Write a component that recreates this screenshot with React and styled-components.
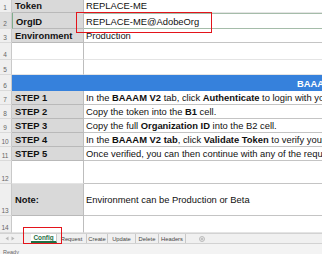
import React from 'react';
import styled, { createGlobalStyle } from 'styled-components';

const Global = createGlobalStyle`
  html, body { margin: 0; padding: 0; background: #fff; }
  body { font-family: "Liberation Sans", Arial, sans-serif; }
`;

const Window = styled.div`
  position: relative;
  width: 322px;
  height: 254px;
  overflow: hidden;
  background: #fff;
  display: flex;
  flex-direction: column;
`;

const Sheet = styled.div`
  display: flex;
  flex-direction: column;
`;

const Row = styled.div`
  display: grid;
  grid-template-columns: 12px 72px 1fr;
  height: ${p => p.$h}px;
  font-size: 9.4px;
  line-height: 11px;
  color: #111;
`;

const RowHead = styled.div`
  background: ${p => (p.$sel ? '#dedede' : '#efefef')};
  border-right: 1px solid #c9c9c9;
  border-bottom: 1px solid #dadada;
  font-size: 6.5px;
  line-height: 8px;
  color: #666;
  display: flex;
  align-items: flex-end;
  justify-content: center;
  padding-right: 1px;
  box-sizing: border-box;
`;

const KeyCell = styled.div`
  background: ${p => (p.$gray ? '#d9d9d9' : '#fff')};
  border-right: 1px solid #bdbdbd;
  border-bottom: 1px solid ${p => (p.$gray ? '#b9b9b9' : '#e4e4e4')};
  border-left: ${p => (p.$sel ? '1px solid #7fae8c' : '0')};
  font-weight: bold;
  padding: 0 0 1px 3px;
  display: flex;
  align-items: ${p => (p.$mid ? 'center' : 'flex-end')};
  white-space: nowrap;
  box-sizing: border-box;
`;

const ValueCell = styled.div`
  border-bottom: 1px solid ${p => (p.$sel ? '#a5bca9' : p.$line ? '#c4c4c4' : '#e4e4e4')};
  border-top: ${p => (p.$sel ? '1px solid #a5bca9' : '0')};
  padding: 0 0 1px 2px;
  display: flex;
  align-items: ${p => (p.$mid ? 'center' : 'flex-end')};
  white-space: pre;
  overflow: hidden;
  box-sizing: border-box;
  b { font-weight: bold; }
`;

const Banner = styled.div`
  grid-column: 2 / 4;
  background: #3681dc;
  color: #fff;
  font-weight: bold;
  padding-left: 285px;
  display: flex;
  align-items: center;
  white-space: nowrap;
  overflow: hidden;
`;

const TabBar = styled.div`
  height: 11px;
  background: #f0f0f0;
  border-top: 1px solid #d2d2d2;
  border-bottom: 1px solid #d2d2d2;
  display: flex;
  align-items: stretch;
  font-size: 5.8px;
  color: #444;
`;

const Arrows = styled.div`
  width: 31px;
  display: flex;
  align-items: center;
  gap: 2px;
  padding-left: 5px;
  box-sizing: border-box;
`;

const Tab = styled.div`
  width: ${p => p.$w}px;
  display: flex;
  align-items: center;
  justify-content: center;
  border-right: 1px solid #c8c8c8;
  box-sizing: border-box;
  background: ${p => (p.$active ? '#fff' : 'transparent')};
  color: ${p => (p.$active ? '#1e7145' : '#444')};
  font-weight: ${p => (p.$active ? 'bold' : 'normal')};
  font-size: ${p => (p.$active ? '6.4px' : '5.8px')};
  border-bottom: ${p => (p.$active ? '2px solid #1e7145' : '0')};
  white-space: nowrap;
`;

const AddTab = styled.div`
  margin-left: 13px;
  display: flex;
  align-items: center;
`;

const StatusBar = styled.div`
  flex: 1;
  background: #f3f3f3;
  font-size: 5.5px;
  color: #666;
  padding: 5px 0 0 3px;
`;

const Mark = styled.div`
  position: absolute;
  left: ${p => p.$x}px;
  top: ${p => p.$y}px;
  width: ${p => p.$w}px;
  height: ${p => p.$h}px;
  border: 1.5px solid #e3141b;
  box-sizing: border-box;
  pointer-events: none;
`;

const steps = [
  [7, 'STEP 1', <>In the <b>BAAAM V2</b> tab, click <b>Authenticate</b> to login with your Adobe ID.</>],
  [8, 'STEP 2', <>Copy the token into the <b>B1</b> cell.</>],
  [9, 'STEP 3', <>Copy the full <b>Organization ID</b> into the B2 cell.</>],
  [10, 'STEP 4', <>In the <b>BAAAM V2 tab</b>, click <b>Validate Token</b> to verify your token.</>],
  [11, 'STEP 5', <>Once verified, you can then continue with any of the request tabs.</>],
];

const Tri = ({ dir }) => (
  <svg width="4" height="5" viewBox="0 0 4 5">
    <path d={dir === 'l' ? 'M3.5 0.5 L0.5 2.5 L3.5 4.5 Z' : 'M0.5 0.5 L3.5 2.5 L0.5 4.5 Z'} fill="#b8b8b8" />
  </svg>
);

export default function App() {
  return (
    <Window>
      <Global />
      <Sheet>
        <Row $h={13}>
          <RowHead>1</RowHead>
          <KeyCell $gray>Token</KeyCell>
          <ValueCell>REPLACE-ME</ValueCell>
        </Row>
        <Row $h={16}>
          <RowHead $sel>2</RowHead>
          <KeyCell $gray $sel>OrgID</KeyCell>
          <ValueCell $sel>REPLACE-ME@AdobeOrg</ValueCell>
        </Row>
        <Row $h={14}>
          <RowHead>3</RowHead>
          <KeyCell $gray>Environment</KeyCell>
          <ValueCell $line>Production</ValueCell>
        </Row>
        <Row $h={17}>
          <RowHead>4</RowHead>
          <KeyCell />
          <ValueCell />
        </Row>
        <Row $h={15}>
          <RowHead>5</RowHead>
          <KeyCell />
          <ValueCell />
        </Row>
        <Row $h={16}>
          <RowHead>6</RowHead>
          <Banner>BAAAM V2 Setup</Banner>
        </Row>
        {steps.map(([n, k, v]) => (
          <Row $h={14} key={n}>
            <RowHead>{n}</RowHead>
            <KeyCell $gray>{k}</KeyCell>
            <ValueCell $line><span>{v}</span></ValueCell>
          </Row>
        ))}
        <Row $h={23}>
          <RowHead>12</RowHead>
          <KeyCell />
          <ValueCell $line />
        </Row>
        <Row $h={32}>
          <RowHead>13</RowHead>
          <KeyCell $gray $mid>Note:</KeyCell>
          <ValueCell $line $mid>Environment can be Production or Beta</ValueCell>
        </Row>
        <Row $h={17}>
          <RowHead>14</RowHead>
          <KeyCell />
          <ValueCell />
        </Row>
      </Sheet>
      <TabBar>
        <Arrows>
          <Tri dir="l" />
          <Tri dir="r" />
        </Arrows>
        <Tab $w={26} $active>Config</Tab>
        <Tab $w={30}>Request</Tab>
        <Tab $w={21}>Create</Tab>
        <Tab $w={28}>Update</Tab>
        <Tab $w={23}>Delete</Tab>
        <Tab $w={27}>Headers</Tab>
        <AddTab>
          <svg width="6" height="6" viewBox="0 0 6 6">
            <circle cx="3" cy="3" r="2.5" fill="none" stroke="#999" strokeWidth="0.6" />
            <path d="M3 1.6 V4.4 M1.6 3 H4.4" stroke="#999" strokeWidth="0.6" />
          </svg>
        </AddTab>
      </TabBar>
      <StatusBar>Ready</StatusBar>
      <Mark $x={76} $y={12} $w={136} $h={21} />
      <Mark $x={23} $y={227} $w={39} $h={17} />
    </Window>
  );
}
